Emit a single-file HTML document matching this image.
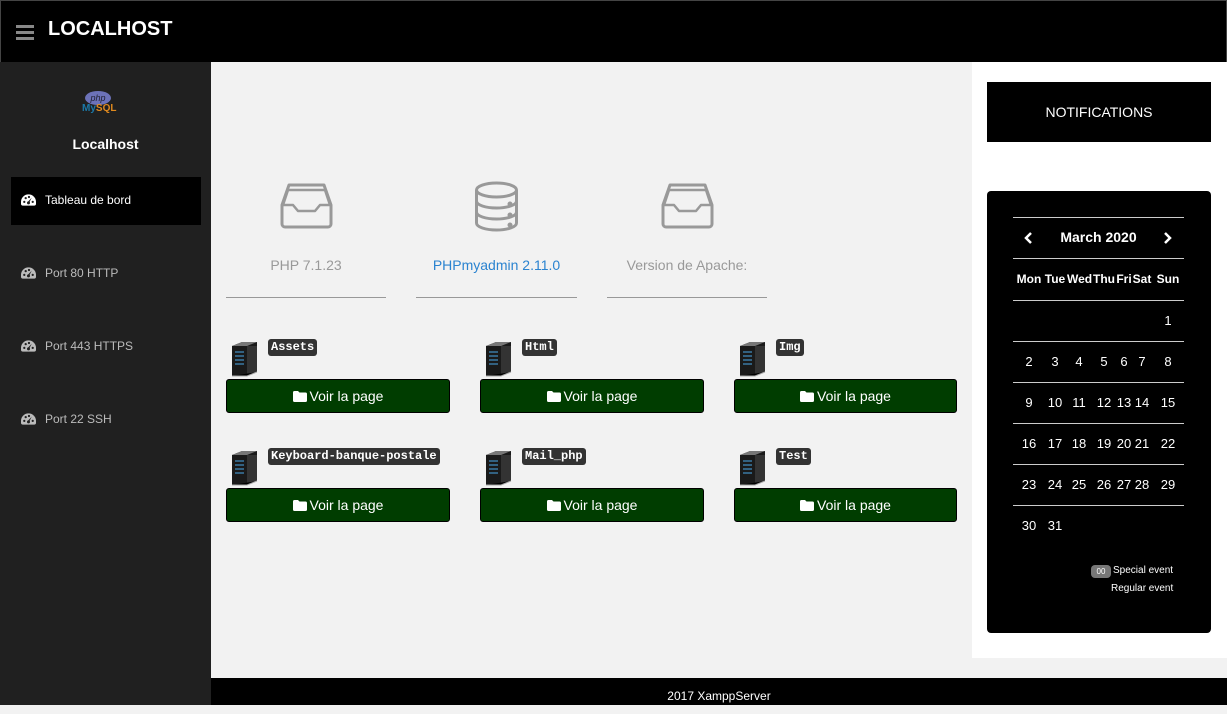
<!DOCTYPE html>
<html><head><meta charset="utf-8"><style>
*{box-sizing:border-box;margin:0;padding:0}
body{width:1227px;height:705px;overflow:hidden;background:#f2f2f2;font-family:"Liberation Sans","DejaVu Sans",sans-serif;position:relative}
.a{position:absolute}
#top{left:0;top:0;width:1227px;height:62px;background:#000;border:1px solid #444;border-bottom:none}
#side{left:0;top:62px;width:211px;height:643px;background:#202020}
.nav{left:21px;font-size:12px;color:#bbb;display:flex;align-items:center;gap:9px}
.btn{width:224px;height:34px;background:#003d00;border:1px solid #000;border-radius:3px;color:#fff;font-size:14px;display:flex;align-items:center;justify-content:center;gap:3px}
.lbl{background:#333;color:#fff;font-family:"Liberation Mono","DejaVu Sans Mono",monospace;font-weight:bold;font-size:12px;padding:1px 3px;border-radius:3px;height:17px;line-height:15px}
.srv{width:30px;height:38px}
.cal div{position:absolute;color:#fff;font-size:13px;text-align:center;width:24px;transform:translateX(-12px)}
.hl{position:absolute;left:1013px;width:171px;height:1px;background:#ccc}
.ln{position:absolute;height:1px;background:#999;width:160px;top:297px}
</style></head><body>
<svg width="0" height="0" style="position:absolute"><defs>
<symbol id="g" viewBox="0 0 16 12"><path d="M8 0a8 8 0 0 0-8 8v2a2 2 0 0 0 2 2h12a2 2 0 0 0 2-2V8a8 8 0 0 0-8-8z" fill="currentColor"/><g fill="#202020"><circle cx="3.5" cy="8" r="1.2"/><circle cx="5" cy="4" r="1.2"/><circle cx="8.5" cy="2.8" r="1.2"/><circle cx="12.5" cy="8" r="1.2"/><path d="M11.5 3.5L8.8 8.6 7.4 7.8z"/><circle cx="8" cy="9" r="1.6"/></g></symbol>
<symbol id="f" viewBox="0 0 14 11"><path d="M0 1.5A1.5 1.5 0 0 1 1.5 0H5l1.5 1.5h6A1.5 1.5 0 0 1 14 3v6.5a1.5 1.5 0 0 1-1.5 1.5h-11A1.5 1.5 0 0 1 0 9.5z" fill="#fff"/></symbol>
<symbol id="s" viewBox="0 0 30 38"><path d="M3 6l10-4h15v30l-10 4H3z" fill="#1a1a1a"/><path d="M18 6h10v26l-10 4z" fill="#333"/><path d="M3 6l10-4h15l-10 4z" fill="#777"/><g stroke="#4aa8e8" stroke-width="1"><path d="M6 12h9M6 16h9M6 20h9M6 24h9"/></g><path d="M3 36h15l10-4" stroke="#aaa"/></symbol>
</defs></svg>
<div id="top" class="a">
 <div class="a" style="left:15px;top:24px;width:18px;height:3px;background:#888;box-shadow:0 6px 0 #888,0 12px 0 #888"></div>
 <div class="a" style="left:47px;top:17px;color:#fff;font-weight:bold;font-size:20px">LOCALHOST</div>
</div>
<div id="side" class="a">
 <div class="a" style="left:82px;top:28px;width:46px;height:28px">
  <div class="a" style="left:3px;top:1px;width:26px;height:14px;border-radius:50%;background:#6c72b8;color:#223;font-size:9px;font-style:italic;text-align:center;line-height:14px">php</div>
  <div class="a" style="left:0;top:13px;font-size:10px;color:#1b79a8;font-weight:bold">My<span style="color:#e08a1e">SQL</span></div>
 </div>
 <div class="a" style="left:0;width:211px;top:74px;text-align:center;color:#fff;font-weight:bold;font-size:14px">Localhost</div>
 <div class="a" style="left:11px;top:115px;width:190px;height:48px;background:#000"></div>
 <div class="a nav" style="top:131px;color:#fff"><svg width="15" height="12"><use href="#g"/></svg>Tableau de bord</div>
 <div class="a nav" style="top:204px"><svg width="15" height="12"><use href="#g"/></svg>Port 80 HTTP</div>
 <div class="a nav" style="top:277px"><svg width="15" height="12"><use href="#g"/></svg>Port 443 HTTPS</div>
 <div class="a nav" style="top:350px"><svg width="15" height="12"><use href="#g"/></svg>Port 22 SSH</div>
</div>
<div class="a" style="left:972px;top:62px;width:255px;height:596px;background:#fff"></div>
<div class="a" style="left:987px;top:82px;width:224px;height:60px;background:#000;color:#fff;font-size:14px;text-align:center;line-height:60px">NOTIFICATIONS</div>
<div class="a" style="left:987px;top:191px;width:224px;height:442px;background:#000;border-radius:4px"></div>
<div class="hl" style="top:217px"></div><div class="hl" style="top:258px"></div><div class="hl" style="top:300px"></div><div class="hl" style="top:341px"></div><div class="hl" style="top:382px"></div><div class="hl" style="top:423px"></div><div class="hl" style="top:464px"></div><div class="hl" style="top:505px"></div>
<svg class="a" style="left:1023px;top:231px" width="10" height="14"><path d="M8 2L3 7l5 5" stroke="#fff" stroke-width="2.5" fill="none"/></svg>
<svg class="a" style="left:1163px;top:231px" width="10" height="14"><path d="M2 2l5 5-5 5" stroke="#fff" stroke-width="2.5" fill="none"/></svg>
<div class="a" style="left:1013px;width:171px;top:229px;text-align:center;color:#fff;font-size:14px;font-weight:bold">March 2020</div>
<div class="cal">
<div style="left:1029px;top:272px;font-weight:bold;font-size:12px;width:30px;transform:translateX(-15px)">Mon</div><div style="left:1055px;top:272px;font-weight:bold;font-size:12px">Tue</div><div style="left:1079px;top:272px;font-weight:bold;font-size:12px">Wed</div><div style="left:1104px;top:272px;font-weight:bold;font-size:12px">Thu</div><div style="left:1124px;top:272px;font-weight:bold;font-size:12px">Fri</div><div style="left:1142px;top:272px;font-weight:bold;font-size:12px">Sat</div><div style="left:1168px;top:272px;font-weight:bold;font-size:12px">Sun</div>
<div style="left:1168px;top:313px">1</div>
<div style="left:1029px;top:354px">2</div><div style="left:1055px;top:354px">3</div><div style="left:1079px;top:354px">4</div><div style="left:1104px;top:354px">5</div><div style="left:1124px;top:354px">6</div><div style="left:1142px;top:354px">7</div><div style="left:1168px;top:354px">8</div>
<div style="left:1029px;top:395px">9</div><div style="left:1055px;top:395px">10</div><div style="left:1079px;top:395px">11</div><div style="left:1104px;top:395px">12</div><div style="left:1124px;top:395px">13</div><div style="left:1142px;top:395px">14</div><div style="left:1168px;top:395px">15</div>
<div style="left:1029px;top:436px">16</div><div style="left:1055px;top:436px">17</div><div style="left:1079px;top:436px">18</div><div style="left:1104px;top:436px">19</div><div style="left:1124px;top:436px">20</div><div style="left:1142px;top:436px">21</div><div style="left:1168px;top:436px">22</div>
<div style="left:1029px;top:477px">23</div><div style="left:1055px;top:477px">24</div><div style="left:1079px;top:477px">25</div><div style="left:1104px;top:477px">26</div><div style="left:1124px;top:477px">27</div><div style="left:1142px;top:477px">28</div><div style="left:1168px;top:477px">29</div>
<div style="left:1029px;top:518px">30</div><div style="left:1055px;top:518px">31</div>
</div>
<div class="a" style="left:1091px;top:565px;width:20px;height:13px;background:#777;border-radius:4px;color:#fff;font-size:8px;text-align:center;line-height:13px">00</div>
<div class="a" style="left:1113px;top:565px;color:#fff;font-size:10px">Special event</div>
<div class="a" style="left:1111px;top:583px;color:#fff;font-size:10px">Regular event</div>

<svg class="a" style="left:280px;top:183px" width="53" height="46" viewBox="0 0 53 46" fill="none" stroke="#999" stroke-width="3" stroke-linejoin="round"><path d="M9 2h35l7 20v19a3 3 0 0 1-3 3H5a3 3 0 0 1-3-3V22z"/><path d="M8 7h37l5 15h-10l-5 6H18l-5-6H3z" stroke-width="2.5"/></svg>
<svg class="a" style="left:473px;top:181px" width="47" height="51" viewBox="0 0 47 51" fill="none" stroke="#999" stroke-width="3"><ellipse cx="23.5" cy="9" rx="20" ry="7"/><path d="M3.5 9v33c0 4 9 7 20 7s20-3 20-7V9M3.5 20c0 4 9 7 20 7s20-3 20-7M3.5 31c0 4 9 7 20 7s20-3 20-7"/><circle cx="37" cy="23" r="1" fill="#999"/><circle cx="37" cy="34" r="1" fill="#999"/><circle cx="37" cy="44" r="1" fill="#999"/></svg>
<svg class="a" style="left:661px;top:183px" width="53" height="46" viewBox="0 0 53 46" fill="none" stroke="#999" stroke-width="3" stroke-linejoin="round"><path d="M9 2h35l7 20v19a3 3 0 0 1-3 3H5a3 3 0 0 1-3-3V22z"/><path d="M8 7h37l5 15h-10l-5 6H18l-5-6H3z" stroke-width="2.5"/></svg>
<div class="a" style="left:226px;width:160px;top:257px;text-align:center;color:#999;font-size:14px">PHP 7.1.23</div>
<div class="a" style="left:416px;width:161px;top:257px;text-align:center;color:#2a83d0;font-size:14px">PHPmyadmin 2.11.0</div>
<div class="a" style="left:607px;width:160px;top:257px;text-align:center;color:#999;font-size:14px">Version de Apache:</div>
<div class="ln" style="left:226px"></div><div class="ln" style="left:416px;width:161px"></div><div class="ln" style="left:607px"></div>

<svg class="a srv" style="left:229px;top:340px"><use href="#s"/></svg>
<div class="a lbl" style="left:268px;top:339px">Assets</div>
<div class="a btn" style="left:226px;top:379px"><svg width="14" height="11"><use href="#f"/></svg>Voir la page</div>
<svg class="a srv" style="left:483px;top:340px"><use href="#s"/></svg>
<div class="a lbl" style="left:522px;top:339px">Html</div>
<div class="a btn" style="left:480px;top:379px"><svg width="14" height="11"><use href="#f"/></svg>Voir la page</div>
<svg class="a srv" style="left:737px;top:340px"><use href="#s"/></svg>
<div class="a lbl" style="left:776px;top:339px">Img</div>
<div class="a btn" style="left:734px;top:379px;width:223px"><svg width="14" height="11"><use href="#f"/></svg>Voir la page</div>

<svg class="a srv" style="left:229px;top:449px"><use href="#s"/></svg>
<div class="a lbl" style="left:268px;top:448px">Keyboard-banque-postale</div>
<div class="a btn" style="left:226px;top:488px"><svg width="14" height="11"><use href="#f"/></svg>Voir la page</div>
<svg class="a srv" style="left:483px;top:449px"><use href="#s"/></svg>
<div class="a lbl" style="left:522px;top:448px">Mail_php</div>
<div class="a btn" style="left:480px;top:488px"><svg width="14" height="11"><use href="#f"/></svg>Voir la page</div>
<svg class="a srv" style="left:737px;top:449px"><use href="#s"/></svg>
<div class="a lbl" style="left:776px;top:448px">Test</div>
<div class="a btn" style="left:734px;top:488px;width:223px"><svg width="14" height="11"><use href="#f"/></svg>Voir la page</div>

<div class="a" style="left:211px;top:678px;width:1016px;height:27px;background:#000;color:#fff;font-size:12px;text-align:center;line-height:36px">2017 XamppServer</div>
</body></html>
